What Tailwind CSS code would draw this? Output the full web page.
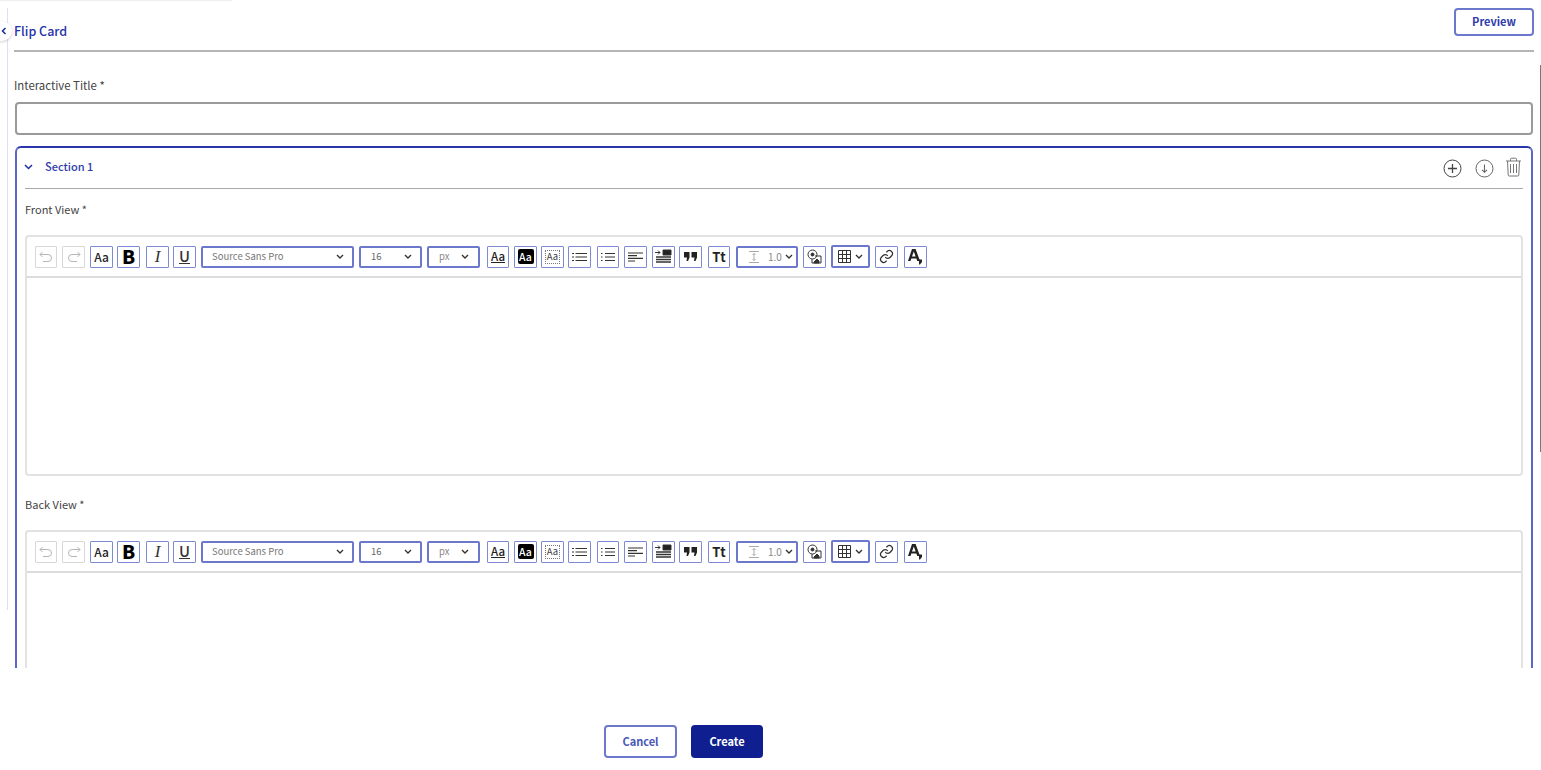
<!DOCTYPE html>
<html lang="en">
<head>
  <meta charset="UTF-8">
  <title>Flip Card</title>
  <script src="https://cdn.jsdelivr.net/npm/@tailwindcss/browser@4"></script>
</head>
<body class="relative h-[770px] overflow-hidden bg-white font-['Noto_Sans_CJK_JP','Source_Sans_Pro',sans-serif] text-[#333]">
  <!-- things that sit over the page edge -->
  <div class="absolute left-0 top-0 h-px w-[232px] bg-[#eeeeee]"></div>
  <div class="absolute left-[7px] top-[8px] h-[602px] w-px bg-[#dde0f5]"></div>
  <div class="absolute left-[-8px] top-[21px] flex h-5 w-5 items-center justify-end rounded-full bg-white pr-[5px] shadow-[0_1px_3px_rgba(0,0,0,0.2)]">
    <svg width="6" height="8" viewBox="0 0 6 8" fill="none" stroke="#1a2a9c" stroke-width="1.5"><path d="M4.5 1 1.5 4l3 3"/></svg>
  </div>
  <div class="absolute right-0 top-[65px] h-[387px] w-px bg-[#777]"></div>

  <div class="h-[668px] overflow-hidden pl-[14px] pr-[7px]">
    <!-- header -->
    <div class="flex h-[52px] items-start justify-between border-b-2 border-[#b5b5b5] pt-[8px]">
      <h1 class="mt-[12px] text-[12.5px] leading-[22px] font-medium text-[#2630a8]">Flip Card</h1>
      <button class="h-[28px] w-[80px] rounded-[4px] border-2 border-[#6c78cc] pb-[2px] text-[11px] font-semibold text-[#2f3cab]">Preview</button>
    </div>

    <div class="pl-px pr-px">
      <label class="mt-[24px] -ml-px block text-[11.4px] leading-[18px] text-[#444]">Interactive Title *</label>
      <input class="mt-[8px] block h-[33px] w-full rounded-[4px] border-2 border-[#9a9a9a] bg-white" type="text">

      <!-- section card -->
      <section class="mt-[11px] h-[600px] rounded-t-[6px] border-x-2 border-t-2 border-[#5a67c8] border-t-[#2936ac] px-[8px]">
        <div class="flex h-[41px] items-center justify-between border-b border-[#a9a9a9]">
          <div class="-mt-[3px] flex items-center">
            <svg class="ml-[-1px]" width="9" height="6" viewBox="0 0 9 6" fill="none" stroke="#1f2c9e" stroke-width="1.5"><path d="M1 1l3.5 3.5L8 1"/></svg>
            <span class="ml-[12px] text-[11px] font-medium text-[#2f3cab]">Section 1</span>
          </div>
          <div class="flex items-center pr-[1px]">
            <svg width="19" height="19" viewBox="0 0 19 19" fill="none" stroke="#444"><circle cx="9.5" cy="9.5" r="8.5"/><path d="M9.5 5v9M5 9.5h9" stroke-width="1.3"/></svg>
            <svg class="ml-[13px]" width="19" height="19" viewBox="0 0 19 19" fill="none" stroke="#666"><circle cx="9.5" cy="9.5" r="8.5"/><path d="M9.5 5.5v7.5M7 10.8l2.5 2.5 2.5-2.5" stroke-width="1.1"/></svg>
            <svg class="ml-[11px] -mt-[2px]" width="17" height="20" viewBox="0 0 17 20" fill="none" stroke="#777"><path d="M1 4h15M5.500 4V2.200q0-1 1-1h4q1 0 1 1V4M2.500 4l.7 14q.1 1 1 1h8.600q.9 0 1-1l.7-14M5.500 7v9M8.500 7v9M11.500 7v9"/></svg>
          </div>
        </div>

        <label class="mt-[11px] block text-[11px] leading-[18px] text-[#444]">Front View *</label>
        <div class="mt-[17px] h-[241px] rounded-[4px] border-2 border-[#e2e2e2]">
          <div class="flex h-[41px] items-center border-b-2 border-[#dcdcdc] pl-[8px]">
            <span class="flex h-[22px] w-[22px] items-center justify-center rounded-[1px] border border-[#d8d8d8]"><svg width="14" height="12" viewBox="0 0 14 12" fill="none" stroke="#b5b5b5"><path d="M3.500 1 1 3.500 3.500 6M1 3.500h8a3.500 3.500 0 0 1 0 7H4"/></svg></span>
            <span class="ml-[5px] flex h-[22px] w-[23px] items-center justify-center rounded-[1px] border border-[#d8d8d8]"><svg width="14" height="12" viewBox="0 0 14 12" fill="none" stroke="#b5b5b5"><path d="M10.500 1 13 3.500 10.500 6M13 3.500H5a3.500 3.500 0 0 0 0 7h5"/></svg></span>
            <span class="ml-[5px] flex h-[22px] w-[23px] items-center justify-center rounded-[1px] border border-[#7f8ad6] text-[12px] font-medium text-[#222]">Aa</span>
            <span class="ml-[4px] flex h-[22px] w-[23px] items-center justify-center rounded-[1px] border border-[#7f8ad6] text-[19px] font-black text-black">B</span>
            <span class="ml-[6px] flex h-[22px] w-[23px] items-center justify-center rounded-[1px] border border-[#7f8ad6] font-['Liberation_Serif',serif] text-[17px] italic text-[#333]">I</span>
            <span class="ml-[4px] flex h-[22px] w-[23px] items-center justify-center rounded-[1px] border border-[#7f8ad6] text-[15px] font-medium text-[#333] underline">U</span>
            <span class="ml-[5px] flex h-[22px] w-[153px] items-center justify-between rounded-[2px] border-2 border-[#6c78cc] pl-[9px] pr-[8px] text-[9.5px] text-[#777]">Source Sans Pro<svg width="8" height="5" viewBox="0 0 8 5" fill="none" stroke="#333" stroke-width="1.4"><path d="M1 1l3 3 3-3"/></svg></span>
            <span class="ml-[5px] flex h-[22px] w-[63px] items-center justify-between rounded-[2px] border-2 border-[#6c78cc] pl-[10px] pr-[8px] text-[9.5px] text-[#666]">16<svg width="8" height="5" viewBox="0 0 8 5" fill="none" stroke="#333" stroke-width="1.4"><path d="M1 1l3 3 3-3"/></svg></span>
            <span class="ml-[5px] flex h-[22px] w-[53px] items-center justify-between rounded-[2px] border-2 border-[#6c78cc] pl-[10px] pr-[9px] text-[9.5px] text-[#888]">px<svg width="8" height="5" viewBox="0 0 8 5" fill="none" stroke="#333" stroke-width="1.4"><path d="M1 1l3 3 3-3"/></svg></span>
            <span class="ml-[7px] flex h-[22px] w-[22px] items-center justify-center rounded-[1px] border border-[#7f8ad6] text-[11.5px] font-medium text-[#222] underline">Aa</span>
            <span class="ml-[5px] flex h-[22px] w-[23px] items-center justify-center rounded-[1px] border border-[#7f8ad6]"><span class="flex h-[15px] w-[16px] items-center justify-center rounded-[2px] bg-black text-[10.5px] font-medium text-white">Aa</span></span>
            <span class="ml-[4px] flex h-[22px] w-[23px] items-center justify-center rounded-[1px] border border-[#7f8ad6]"><span class="flex h-[14px] w-[15px] items-center justify-center border border-dotted border-[#777] text-[9.5px] text-[#444]">Aa</span></span>
            <span class="ml-[4px] flex h-[22px] w-[23px] items-center justify-center rounded-[1px] border border-[#7f8ad6]"><svg width="15" height="10" viewBox="0 0 15 10" stroke="#333" stroke-width="1.2"><path d="M0 1.500h2M3.500 1.500h11.500M0 5h2M3.500 5h11.500M0 8.500h2M3.500 8.500h11.500"/></svg></span>
            <span class="ml-[6px] flex h-[22px] w-[22px] items-center justify-center rounded-[1px] border border-[#7f8ad6]"><svg width="14" height="10" viewBox="0 0 14 10" stroke="#333" stroke-width="1.2"><path d="M0 1.500h1.500M4 1.500h10M0 5h1.500M4 5h10M0 8.500h1.500M4 8.500h10" /></svg></span>
            <span class="ml-[5px] flex h-[22px] w-[23px] items-center justify-center rounded-[1px] border border-[#7f8ad6]"><svg width="15" height="10" viewBox="0 0 15 10" stroke="#333" stroke-width="1.2"><path d="M0 1h15M0 3.700h9M0 6.300h15M0 9h7"/></svg></span>
            <span class="ml-[5px] flex h-[22px] w-[23px] items-center justify-center rounded-[1px] border border-[#7f8ad6]"><svg width="17" height="15" viewBox="0 0 17 15" fill="none" stroke="#333"><path d="M0 3.500h5M3 1.500l2 2-2 2" /><path d="M8 1h8v5H8z" fill="#222"/><path d="M1 8h15M1 10.500h15M1 13h15" stroke-width="1.300"/></svg></span>
            <span class="ml-[4px] flex h-[22px] w-[23px] items-center justify-center rounded-[1px] border border-[#7f8ad6]"><svg width="13" height="9" viewBox="0 0 13 9" fill="#222"><path d="M0 0h5.500v5.500L4 9H2.500l.5-3.500H0zM7.500 0H13v5.500L11.500 9H10l.5-3.500h-3z"/></svg></span>
            <span class="ml-[6px] flex h-[22px] w-[22px] items-center justify-center rounded-[1px] border border-[#7f8ad6] text-[13px] font-bold text-[#222]">Tt</span>
            <span class="ml-[6px] flex h-[22px] w-[62px] items-center rounded-[2px] border-2 border-[#6c78cc] pl-[10px] text-[10px] text-[#888]"><svg width="12" height="12" viewBox="0 0 12 12" fill="none" stroke="#aaa"><path d="M1 .5h10M1 11.500h10M6 2.500v7M4.500 4 6 2.500 7.500 4M4.500 8 6 9.500 7.500 8"/></svg><span class="ml-[8px]">1.0</span><svg class="ml-[3px]" width="8" height="5" viewBox="0 0 8 5" fill="none" stroke="#333" stroke-width="1.4"><path d="M1 1l3 3 3-3"/></svg></span>
            <span class="ml-[5px] flex h-[22px] w-[23px] items-center justify-center rounded-[1px] border border-[#7f8ad6]"><svg width="15" height="15" viewBox="0 0 15 15" fill="none" stroke="#333"><circle cx="5.500" cy="5.500" r="4.500"/><circle cx="5.500" cy="5.500" r="1.500" fill="#333"/><path d="M8 7h6v7H5v-4" /><path d="M7 13l3-3 2 2v2H7z" fill="#333"/></svg></span>
            <span class="ml-[5px] flex h-[23px] w-[39px] items-center justify-center rounded-[2px] border-2 border-[#6c78cc]"><svg width="13" height="13" viewBox="0 0 13 13" fill="none" stroke="#333"><path d="M.5.500h12v12H.5zM4.500.500v12M8.500.500v12M.5 4.500h12M.5 8.500h12"/></svg><svg class="ml-[4px]" width="8" height="5" viewBox="0 0 8 5" fill="none" stroke="#333" stroke-width="1.4"><path d="M1 1l3 3 3-3"/></svg></span>
            <span class="ml-[5px] flex h-[22px] w-[23px] items-center justify-center rounded-[1px] border border-[#7f8ad6]"><svg width="15" height="15" viewBox="0 0 24 24" fill="none" stroke="#333" stroke-width="2"><path d="M10 13a5 5 0 0 0 7.500.5l3-3a5 5 0 0 0-7-7l-1.700 1.700"/><path d="M14 11a5 5 0 0 0-7.500-.5l-3 3a5 5 0 0 0 7 7l1.700-1.700"/></svg></span>
            <span class="ml-[6px] flex h-[22px] w-[23px] items-center justify-center rounded-[1px] border border-[#7f8ad6]"><svg width="15" height="16" viewBox="0 0 15 16" fill="#222"><path d="M4 0h3.600L12 12H9.200l-.8-2.400H3.300L2.500 12H0zM4 7.400h3.600L5.800 2.500z"/><path d="M11 10.500h3v2.500l-2 2.500h-1z"/></svg></span>
          </div>
        </div>

        <label class="mt-[19px] block text-[11px] leading-[18px] text-[#444]">Back View *</label>
        <div class="mt-[17px] h-[241px] rounded-[4px] border-2 border-[#e2e2e2]">
          <div class="flex h-[41px] items-center border-b-2 border-[#dcdcdc] pl-[8px]">
            <span class="flex h-[22px] w-[22px] items-center justify-center rounded-[1px] border border-[#d8d8d8]"><svg width="14" height="12" viewBox="0 0 14 12" fill="none" stroke="#b5b5b5"><path d="M3.500 1 1 3.500 3.500 6M1 3.500h8a3.500 3.500 0 0 1 0 7H4"/></svg></span>
            <span class="ml-[5px] flex h-[22px] w-[23px] items-center justify-center rounded-[1px] border border-[#d8d8d8]"><svg width="14" height="12" viewBox="0 0 14 12" fill="none" stroke="#b5b5b5"><path d="M10.500 1 13 3.500 10.500 6M13 3.500H5a3.500 3.500 0 0 0 0 7h5"/></svg></span>
            <span class="ml-[5px] flex h-[22px] w-[23px] items-center justify-center rounded-[1px] border border-[#7f8ad6] text-[12px] font-medium text-[#222]">Aa</span>
            <span class="ml-[4px] flex h-[22px] w-[23px] items-center justify-center rounded-[1px] border border-[#7f8ad6] text-[19px] font-black text-black">B</span>
            <span class="ml-[6px] flex h-[22px] w-[23px] items-center justify-center rounded-[1px] border border-[#7f8ad6] font-['Liberation_Serif',serif] text-[17px] italic text-[#333]">I</span>
            <span class="ml-[4px] flex h-[22px] w-[23px] items-center justify-center rounded-[1px] border border-[#7f8ad6] text-[15px] font-medium text-[#333] underline">U</span>
            <span class="ml-[5px] flex h-[22px] w-[153px] items-center justify-between rounded-[2px] border-2 border-[#6c78cc] pl-[9px] pr-[8px] text-[9.5px] text-[#777]">Source Sans Pro<svg width="8" height="5" viewBox="0 0 8 5" fill="none" stroke="#333" stroke-width="1.4"><path d="M1 1l3 3 3-3"/></svg></span>
            <span class="ml-[5px] flex h-[22px] w-[63px] items-center justify-between rounded-[2px] border-2 border-[#6c78cc] pl-[10px] pr-[8px] text-[9.5px] text-[#666]">16<svg width="8" height="5" viewBox="0 0 8 5" fill="none" stroke="#333" stroke-width="1.4"><path d="M1 1l3 3 3-3"/></svg></span>
            <span class="ml-[5px] flex h-[22px] w-[53px] items-center justify-between rounded-[2px] border-2 border-[#6c78cc] pl-[10px] pr-[9px] text-[9.5px] text-[#888]">px<svg width="8" height="5" viewBox="0 0 8 5" fill="none" stroke="#333" stroke-width="1.4"><path d="M1 1l3 3 3-3"/></svg></span>
            <span class="ml-[7px] flex h-[22px] w-[22px] items-center justify-center rounded-[1px] border border-[#7f8ad6] text-[11.5px] font-medium text-[#222] underline">Aa</span>
            <span class="ml-[5px] flex h-[22px] w-[23px] items-center justify-center rounded-[1px] border border-[#7f8ad6]"><span class="flex h-[15px] w-[16px] items-center justify-center rounded-[2px] bg-black text-[10.5px] font-medium text-white">Aa</span></span>
            <span class="ml-[4px] flex h-[22px] w-[23px] items-center justify-center rounded-[1px] border border-[#7f8ad6]"><span class="flex h-[14px] w-[15px] items-center justify-center border border-dotted border-[#777] text-[9.5px] text-[#444]">Aa</span></span>
            <span class="ml-[4px] flex h-[22px] w-[23px] items-center justify-center rounded-[1px] border border-[#7f8ad6]"><svg width="15" height="10" viewBox="0 0 15 10" stroke="#333" stroke-width="1.2"><path d="M0 1.500h2M3.500 1.500h11.500M0 5h2M3.500 5h11.500M0 8.500h2M3.500 8.500h11.500"/></svg></span>
            <span class="ml-[6px] flex h-[22px] w-[22px] items-center justify-center rounded-[1px] border border-[#7f8ad6]"><svg width="14" height="10" viewBox="0 0 14 10" stroke="#333" stroke-width="1.2"><path d="M0 1.500h1.500M4 1.500h10M0 5h1.500M4 5h10M0 8.500h1.500M4 8.500h10" /></svg></span>
            <span class="ml-[5px] flex h-[22px] w-[23px] items-center justify-center rounded-[1px] border border-[#7f8ad6]"><svg width="15" height="10" viewBox="0 0 15 10" stroke="#333" stroke-width="1.2"><path d="M0 1h15M0 3.700h9M0 6.300h15M0 9h7"/></svg></span>
            <span class="ml-[5px] flex h-[22px] w-[23px] items-center justify-center rounded-[1px] border border-[#7f8ad6]"><svg width="17" height="15" viewBox="0 0 17 15" fill="none" stroke="#333"><path d="M0 3.500h5M3 1.500l2 2-2 2" /><path d="M8 1h8v5H8z" fill="#222"/><path d="M1 8h15M1 10.500h15M1 13h15" stroke-width="1.300"/></svg></span>
            <span class="ml-[4px] flex h-[22px] w-[23px] items-center justify-center rounded-[1px] border border-[#7f8ad6]"><svg width="13" height="9" viewBox="0 0 13 9" fill="#222"><path d="M0 0h5.500v5.500L4 9H2.500l.5-3.500H0zM7.500 0H13v5.500L11.500 9H10l.5-3.500h-3z"/></svg></span>
            <span class="ml-[6px] flex h-[22px] w-[22px] items-center justify-center rounded-[1px] border border-[#7f8ad6] text-[13px] font-bold text-[#222]">Tt</span>
            <span class="ml-[6px] flex h-[22px] w-[62px] items-center rounded-[2px] border-2 border-[#6c78cc] pl-[10px] text-[10px] text-[#888]"><svg width="12" height="12" viewBox="0 0 12 12" fill="none" stroke="#aaa"><path d="M1 .5h10M1 11.500h10M6 2.500v7M4.500 4 6 2.500 7.500 4M4.500 8 6 9.500 7.500 8"/></svg><span class="ml-[8px]">1.0</span><svg class="ml-[3px]" width="8" height="5" viewBox="0 0 8 5" fill="none" stroke="#333" stroke-width="1.4"><path d="M1 1l3 3 3-3"/></svg></span>
            <span class="ml-[5px] flex h-[22px] w-[23px] items-center justify-center rounded-[1px] border border-[#7f8ad6]"><svg width="15" height="15" viewBox="0 0 15 15" fill="none" stroke="#333"><circle cx="5.500" cy="5.500" r="4.500"/><circle cx="5.500" cy="5.500" r="1.500" fill="#333"/><path d="M8 7h6v7H5v-4" /><path d="M7 13l3-3 2 2v2H7z" fill="#333"/></svg></span>
            <span class="ml-[5px] flex h-[23px] w-[39px] items-center justify-center rounded-[2px] border-2 border-[#6c78cc]"><svg width="13" height="13" viewBox="0 0 13 13" fill="none" stroke="#333"><path d="M.5.500h12v12H.5zM4.500.500v12M8.500.500v12M.5 4.500h12M.5 8.500h12"/></svg><svg class="ml-[4px]" width="8" height="5" viewBox="0 0 8 5" fill="none" stroke="#333" stroke-width="1.4"><path d="M1 1l3 3 3-3"/></svg></span>
            <span class="ml-[5px] flex h-[22px] w-[23px] items-center justify-center rounded-[1px] border border-[#7f8ad6]"><svg width="15" height="15" viewBox="0 0 24 24" fill="none" stroke="#333" stroke-width="2"><path d="M10 13a5 5 0 0 0 7.500.5l3-3a5 5 0 0 0-7-7l-1.700 1.700"/><path d="M14 11a5 5 0 0 0-7.500-.5l-3 3a5 5 0 0 0 7 7l1.700-1.700"/></svg></span>
            <span class="ml-[6px] flex h-[22px] w-[23px] items-center justify-center rounded-[1px] border border-[#7f8ad6]"><svg width="15" height="16" viewBox="0 0 15 16" fill="#222"><path d="M4 0h3.600L12 12H9.200l-.8-2.400H3.300L2.500 12H0zM4 7.400h3.600L5.800 2.500z"/><path d="M11 10.500h3v2.500l-2 2.500h-1z"/></svg></span>
          </div>
        </div>
      </section>
    </div>
  </div>

  <!-- footer -->
  <div class="flex h-[102px] justify-center pr-[174px] pt-[57px]">
    <button class="h-[33px] w-[73px] rounded-[4px] border-2 border-[#6c78cc] text-[11px] font-semibold text-[#4a57b8]">Cancel</button>
    <button class="ml-[14px] h-[33px] w-[72px] rounded-[4px] bg-[#0f1f8f] text-[11px] font-semibold text-white">Create</button>
  </div>
</body>
</html>
